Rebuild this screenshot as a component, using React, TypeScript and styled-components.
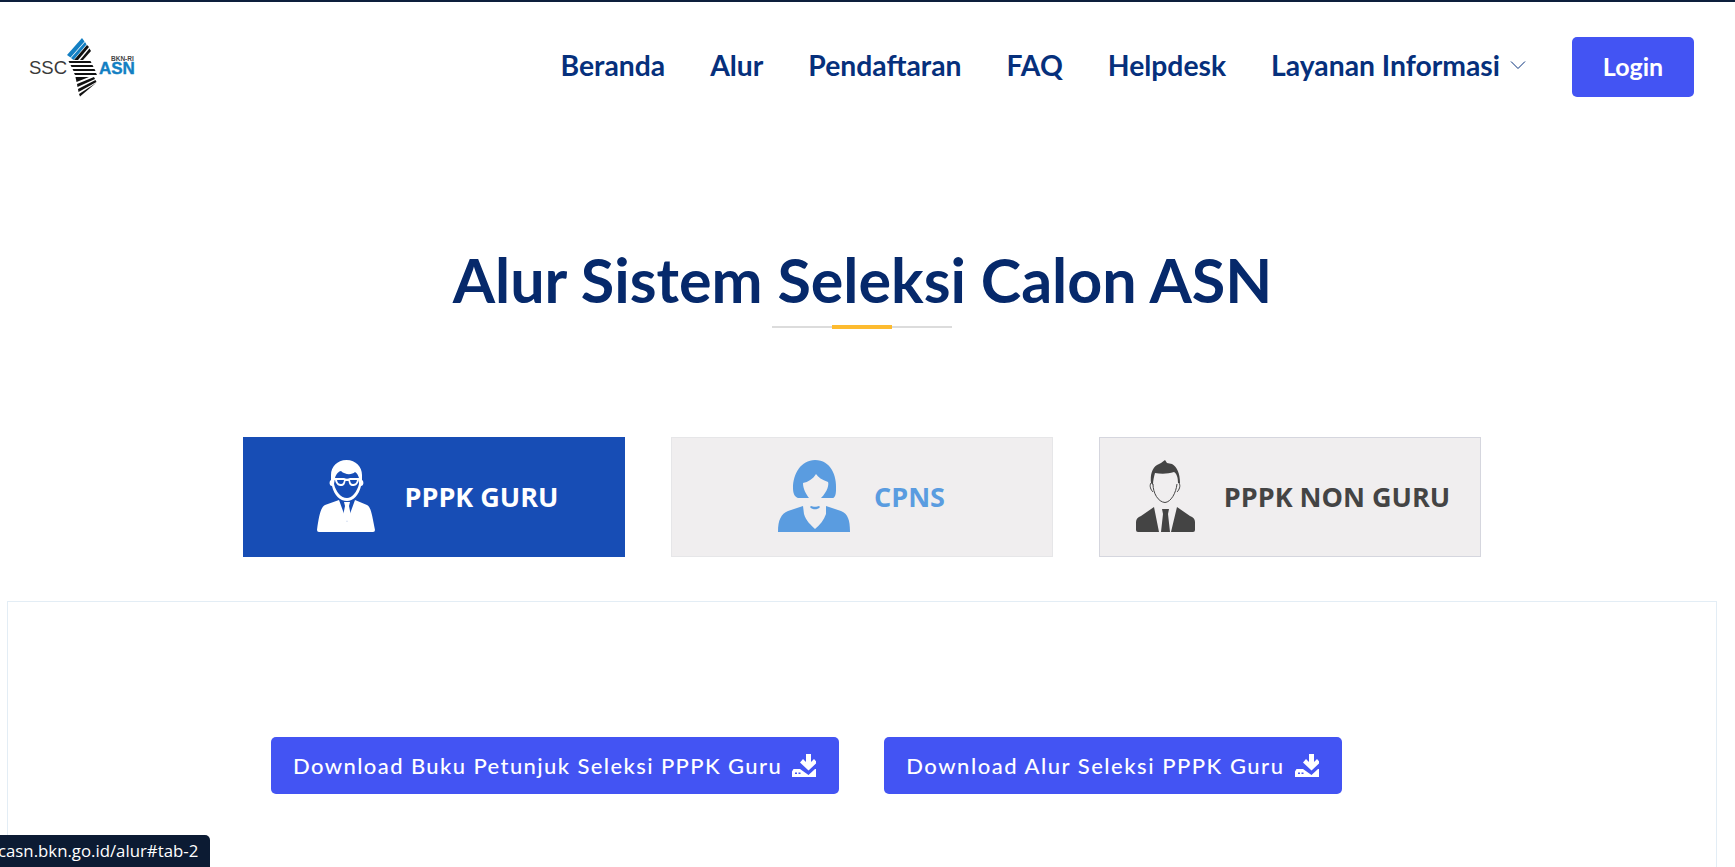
import { FC } from 'react';
import styled, { createGlobalStyle } from 'styled-components';

const GlobalStyle = createGlobalStyle`
    html, body {
        margin: 0;
        padding: 0;
        height: 100%;
        background: #fff;
        overflow: hidden;
    }
    * {
        box-sizing: border-box;
    }
`;

const Page = styled.div`
    position: relative;
    height: 867px;
    overflow: hidden;
    border-top: 2px solid #0d1f3c;
    font-family: 'Lato', 'Open Sans', sans-serif;
`;

const Header = styled.header`
    display: flex;
    align-items: center;
    justify-content: space-between;
    height: 130px;
    padding: 0 41px 0 29px;
`;

const Nav = styled.nav`
    display: flex;
    align-items: center;
    gap: 45px;
`;

const NavLink = styled.a`
    display: flex;
    align-items: center;
    gap: 10px;
    padding-bottom: 5px;
    color: #06307c;
    font-size: 28.3px;
    font-weight: 700;
    text-decoration: none;
`;

const LoginButton = styled.a`
    display: flex;
    align-items: center;
    justify-content: center;
    width: 122px;
    height: 60px;
    margin-left: 1px;
    padding-bottom: 2px;
    background: #4354f3;
    border-radius: 5px;
    color: #fff;
    font-size: 25px;
    font-weight: 700;
`;

const TitleBlock = styled.section`
    display: flex;
    flex-direction: column;
    align-items: center;
    padding: 112px 10px 0 0;
`;

const Title = styled.h1`
    margin: 0;
    color: #06296b;
    font-size: 61px;
    line-height: 72px;
    font-weight: 700;
`;

const Divider = styled.div`
    display: flex;
    align-items: center;
    justify-content: center;
    width: 180px;
    height: 4px;
    margin: 9px 2px 0 0;
    background: linear-gradient(#dcdcdc, #dcdcdc) center / 100% 2px no-repeat;
`;

const DividerAccent = styled.span`
    width: 60px;
    height: 4px;
    background: #fdbb2f;
`;

const Tabs = styled.div`
    display: flex;
    justify-content: center;
    gap: 46px;
    margin-top: 108px;
    padding-right: 12px;
`;

const Tab = styled.a<{ $variant: 'active' | 'blue' | 'dark'; $gap: number; $inset: number }>`
    display: flex;
    align-items: center;
    justify-content: center;
    gap: ${p => p.$gap}px;
    width: 382px;
    height: 120px;
    padding: 0 0 2px ${p => p.$inset}px;
    background: ${p => (p.$variant === 'active' ? '#174db5' : '#f0eeef')};
    border: 1px solid
        ${p => (p.$variant === 'active' ? '#174db5' : p.$variant === 'blue' ? '#e6e6e8' : '#d5d6de')};
    color: ${p => (p.$variant === 'active' ? '#fff' : p.$variant === 'blue' ? '#5a9ce0' : '#444')};
    font-family: 'Open Sans', sans-serif;
    font-size: 27px;
    font-weight: 700;
`;

const Panel = styled.section`
    display: flex;
    gap: 45px;
    height: 400px;
    margin: 44px 18px 0 7px;
    padding: 135px 0 0 263px;
    border: 1px solid #e3edf5;
`;

const DownloadButton = styled.a<{ $spacing: number }>`
    display: flex;
    align-items: center;
    gap: 10px;
    height: 57px;
    padding: 0 23px 1px 22px;
    background: #4354f3;
    border-radius: 5px;
    color: #fff;
    font-size: 22px;
    font-weight: 500;
    letter-spacing: ${p => p.$spacing}px;
`;

const StatusBubble = styled.div`
    position: absolute;
    left: 0;
    bottom: 0;
    width: 210px;
    height: 32px;
    overflow: hidden;
    background: #0c1b33;
    border-top-right-radius: 5px;
    color: #fff;
    font-family: 'Open Sans', sans-serif;
    font-size: 16.8px;
    line-height: 32px;
    white-space: nowrap;
`;

const StatusText = styled.span`
    display: block;
    margin-left: -2px;
`;

const Logo: FC = () => (
    <svg width="108" height="60" viewBox="0 0 108 60" aria-label="SSC ASN">
        <text x="0" y="37" fontFamily="Liberation Sans" fontSize="18.5" fill="#3a3a3a">SSC</text>
        <path d="M38 18 L53 1 L55.5 4.5 L41.5 20.5Z" fill="#137fc3" />
        <path d="M42 21 L56 5 L57.5 7.5 L44.5 23Z" fill="#137fc3" />
        <path d="M45 23 L58 8 L60 10 L49 23Z" fill="#111" />
        <path d="M51 23 L60.5 11.5 L62 14 L54 23Z" fill="#111" />
        <path d="M39.5 24 H61.5 L62.5 26 H40.5Z" fill="#111" />
        <path d="M41.5 28 H63.5 L64.5 30 H42.5Z" fill="#111" />
        <path d="M43.5 32 H65.5 L66.5 34 H44.5Z" fill="#111" />
        <path d="M45 36 H67 L68 38 H46Z" fill="#111" />
        <path d="M46.5 40 H60 L47.5 45Z" fill="#111" />
        <path d="M48 47 L65 40 L66 42 L48.5 50Z" fill="#111" />
        <path d="M49 52 L66.5 43 L67.5 45 L49.5 55Z" fill="#111" />
        <path d="M50 57 L67 46 L51 59.5Z" fill="#111" />
        <text x="70" y="37" fontFamily="Liberation Sans" fontSize="17" fontWeight="700" fill="#137fc3" stroke="#137fc3" strokeWidth="0.4">ASN</text>
        <text x="82" y="24" fontFamily="Liberation Sans" fontSize="6.5" fontWeight="700" fill="#444">BKN-RI</text>
    </svg>
);

const Chevron: FC = () => (
    <svg width="16" height="10" viewBox="0 0 16 10" fill="none" stroke="#06307c" strokeWidth="1">
        <path d="M1 1.5 L8 8.5 L15 1.5" />
    </svg>
);

const DownloadIcon: FC = () => (
    <svg width="24" height="23" viewBox="0 0 24 23" fill="#fff">
        <path d="M14 0 H19 V8 L22 5 L25 8.5 L16.5 16.5 L8 8.5 L11 5 L14 8Z" />
        <path d="M1.5 15 H8 L16.5 21 L23 15 H24 V23 H0 V17.5Z M3 18.5 V20 H5 V18.5Z M6.5 18.5 V20 H8.5 V18.5Z" fillRule="evenodd" />
    </svg>
);

const TeacherIcon: FC = () => (
    <svg width="58" height="72" viewBox="0 0 58 72" fill="#fff">
        <path d="M29.5 0 C39 0 45 7 45 15 L45 20 C47 21 47 26 44 26 C42 35 36 41 30 41 C23 41 17 35 15 26 C12 26 12 21 14 20 L14 15 C14 7 20 0 29.5 0Z" />
        <path d="M18 18 C19 14 22 11 24 11 C28 15 35 15 38 12 C40 13 41 15 42 18 L42 24 C40 32 35 38 30 38 C24 38 19 32 17 24Z" fill="#174db5" />
        <path d="M17 18 H27 C29 19 31 19 33 18 H43 V20 H42 C41 25 38 26 36 26 C33 26 32 24 31.5 21 H28.5 C28 24 27 26 24 26 C22 26 19 25 18 20 H17Z M20 20 C20.5 23 22 24 24 24 C26 24 26.5 22.5 27 20Z M33 20 C33.5 22.5 34 24 36 24 C38 24 39.5 23 40 20Z" fillRule="evenodd" />
        <path d="M22 40 L30 62 L38 40 L50 45 C54 47 55 55 58 70 Q58 72 56 72 H2 Q0 72 0 70 C2 55 4 47 8 45Z" />
        <path d="M27 42 H33 L32 46 L34 56 L30 62 L26 56 L28 46Z" />
    </svg>
);

const WomanIcon: FC = () => (
    <svg width="74" height="72" viewBox="0 0 74 72" fill="#5a9ce0">
        <path d="M37 0 C53 0 59 16 58 30 C58 36 56 38 55 38 H43 C50 31 51 24 50 22 C44 20 40 17 38 14 C35 19 30 22 25 23 C25 29 28 34 31 38 H20 C17 37 15 34 15 28 C15 14 23 0 37 0Z" />
        <path d="M25 46 L26 54 C28 61 33 65 37 69 C42 65 46 60 48 54 L48 46 L63 51 C70 54 72 60 72 72 H0 C0 60 3 54 10 51Z" />
        <path d="M32 47 C34 50 40 50 42 47 L41 46 C39 47 35 47 33 46Z" />
    </svg>
);

const ManIcon: FC = () => (
    <svg width="59" height="72" viewBox="0 0 59 72" fill="#444">
        <path d="M29 0 L31 3 L36 4 C41 7 44 13 44 23 L42 23 C42 18 41 14 38 12 C32 14 25 14 19 13 C18 17 17 20 17 25 L15 23 C14 15 16 8 21 5 L25 3Z" />
        <path d="M17 24 C17 33 22 42 29 42.5 C35 42 40 33 41 24 M15 23 C13 26 15 30 17 32 M43 23 C45 26 43 30 41 32" fill="none" stroke="#444" strokeWidth="1" />
        <path d="M18 47 L23 72 H2 Q0 72 0 70 L0 62 C0 59 2 57 5 56Z" />
        <path d="M41 47 L35 72 H57 Q59 72 59 70 L59 62 C59 59 57 57 54 56Z" />
        <path d="M26 49 H33 L32 54 L34 72 H25 L27 54Z" />
    </svg>
);

const App: FC = () => {
    return (
        <>
            <GlobalStyle />
            <Page>
                <Header>
                    <Logo />
                    <Nav>
                        <NavLink>Beranda</NavLink>
                        <NavLink>Alur</NavLink>
                        <NavLink>Pendaftaran</NavLink>
                        <NavLink>FAQ</NavLink>
                        <NavLink>Helpdesk</NavLink>
                        <NavLink>
                            Layanan Informasi
                            <Chevron />
                        </NavLink>
                        <LoginButton>Login</LoginButton>
                    </Nav>
                </Header>
                <TitleBlock>
                    <Title>Alur Sistem Seleksi Calon ASN</Title>
                    <Divider>
                        <DividerAccent />
                    </Divider>
                </TitleBlock>
                <Tabs>
                    <Tab $variant="active" $gap={30} $inset={8}>
                        <TeacherIcon />
                        PPPK GURU
                    </Tab>
                    <Tab $variant="blue" $gap={22} $inset={0}>
                        <WomanIcon />
                        CPNS
                    </Tab>
                    <Tab $variant="dark" $gap={29} $inset={7}>
                        <ManIcon />
                        PPPK NON GURU
                    </Tab>
                </Tabs>
                <Panel>
                    <DownloadButton $spacing={1.4}>
                        Download Buku Petunjuk Seleksi PPPK Guru
                        <DownloadIcon />
                    </DownloadButton>
                    <DownloadButton $spacing={1.52}>
                        Download Alur Seleksi PPPK Guru
                        <DownloadIcon />
                    </DownloadButton>
                </Panel>
                <StatusBubble>
                    <StatusText>casn.bkn.go.id/alur#tab-2</StatusText>
                </StatusBubble>
            </Page>
        </>
    );
};

export default App;
